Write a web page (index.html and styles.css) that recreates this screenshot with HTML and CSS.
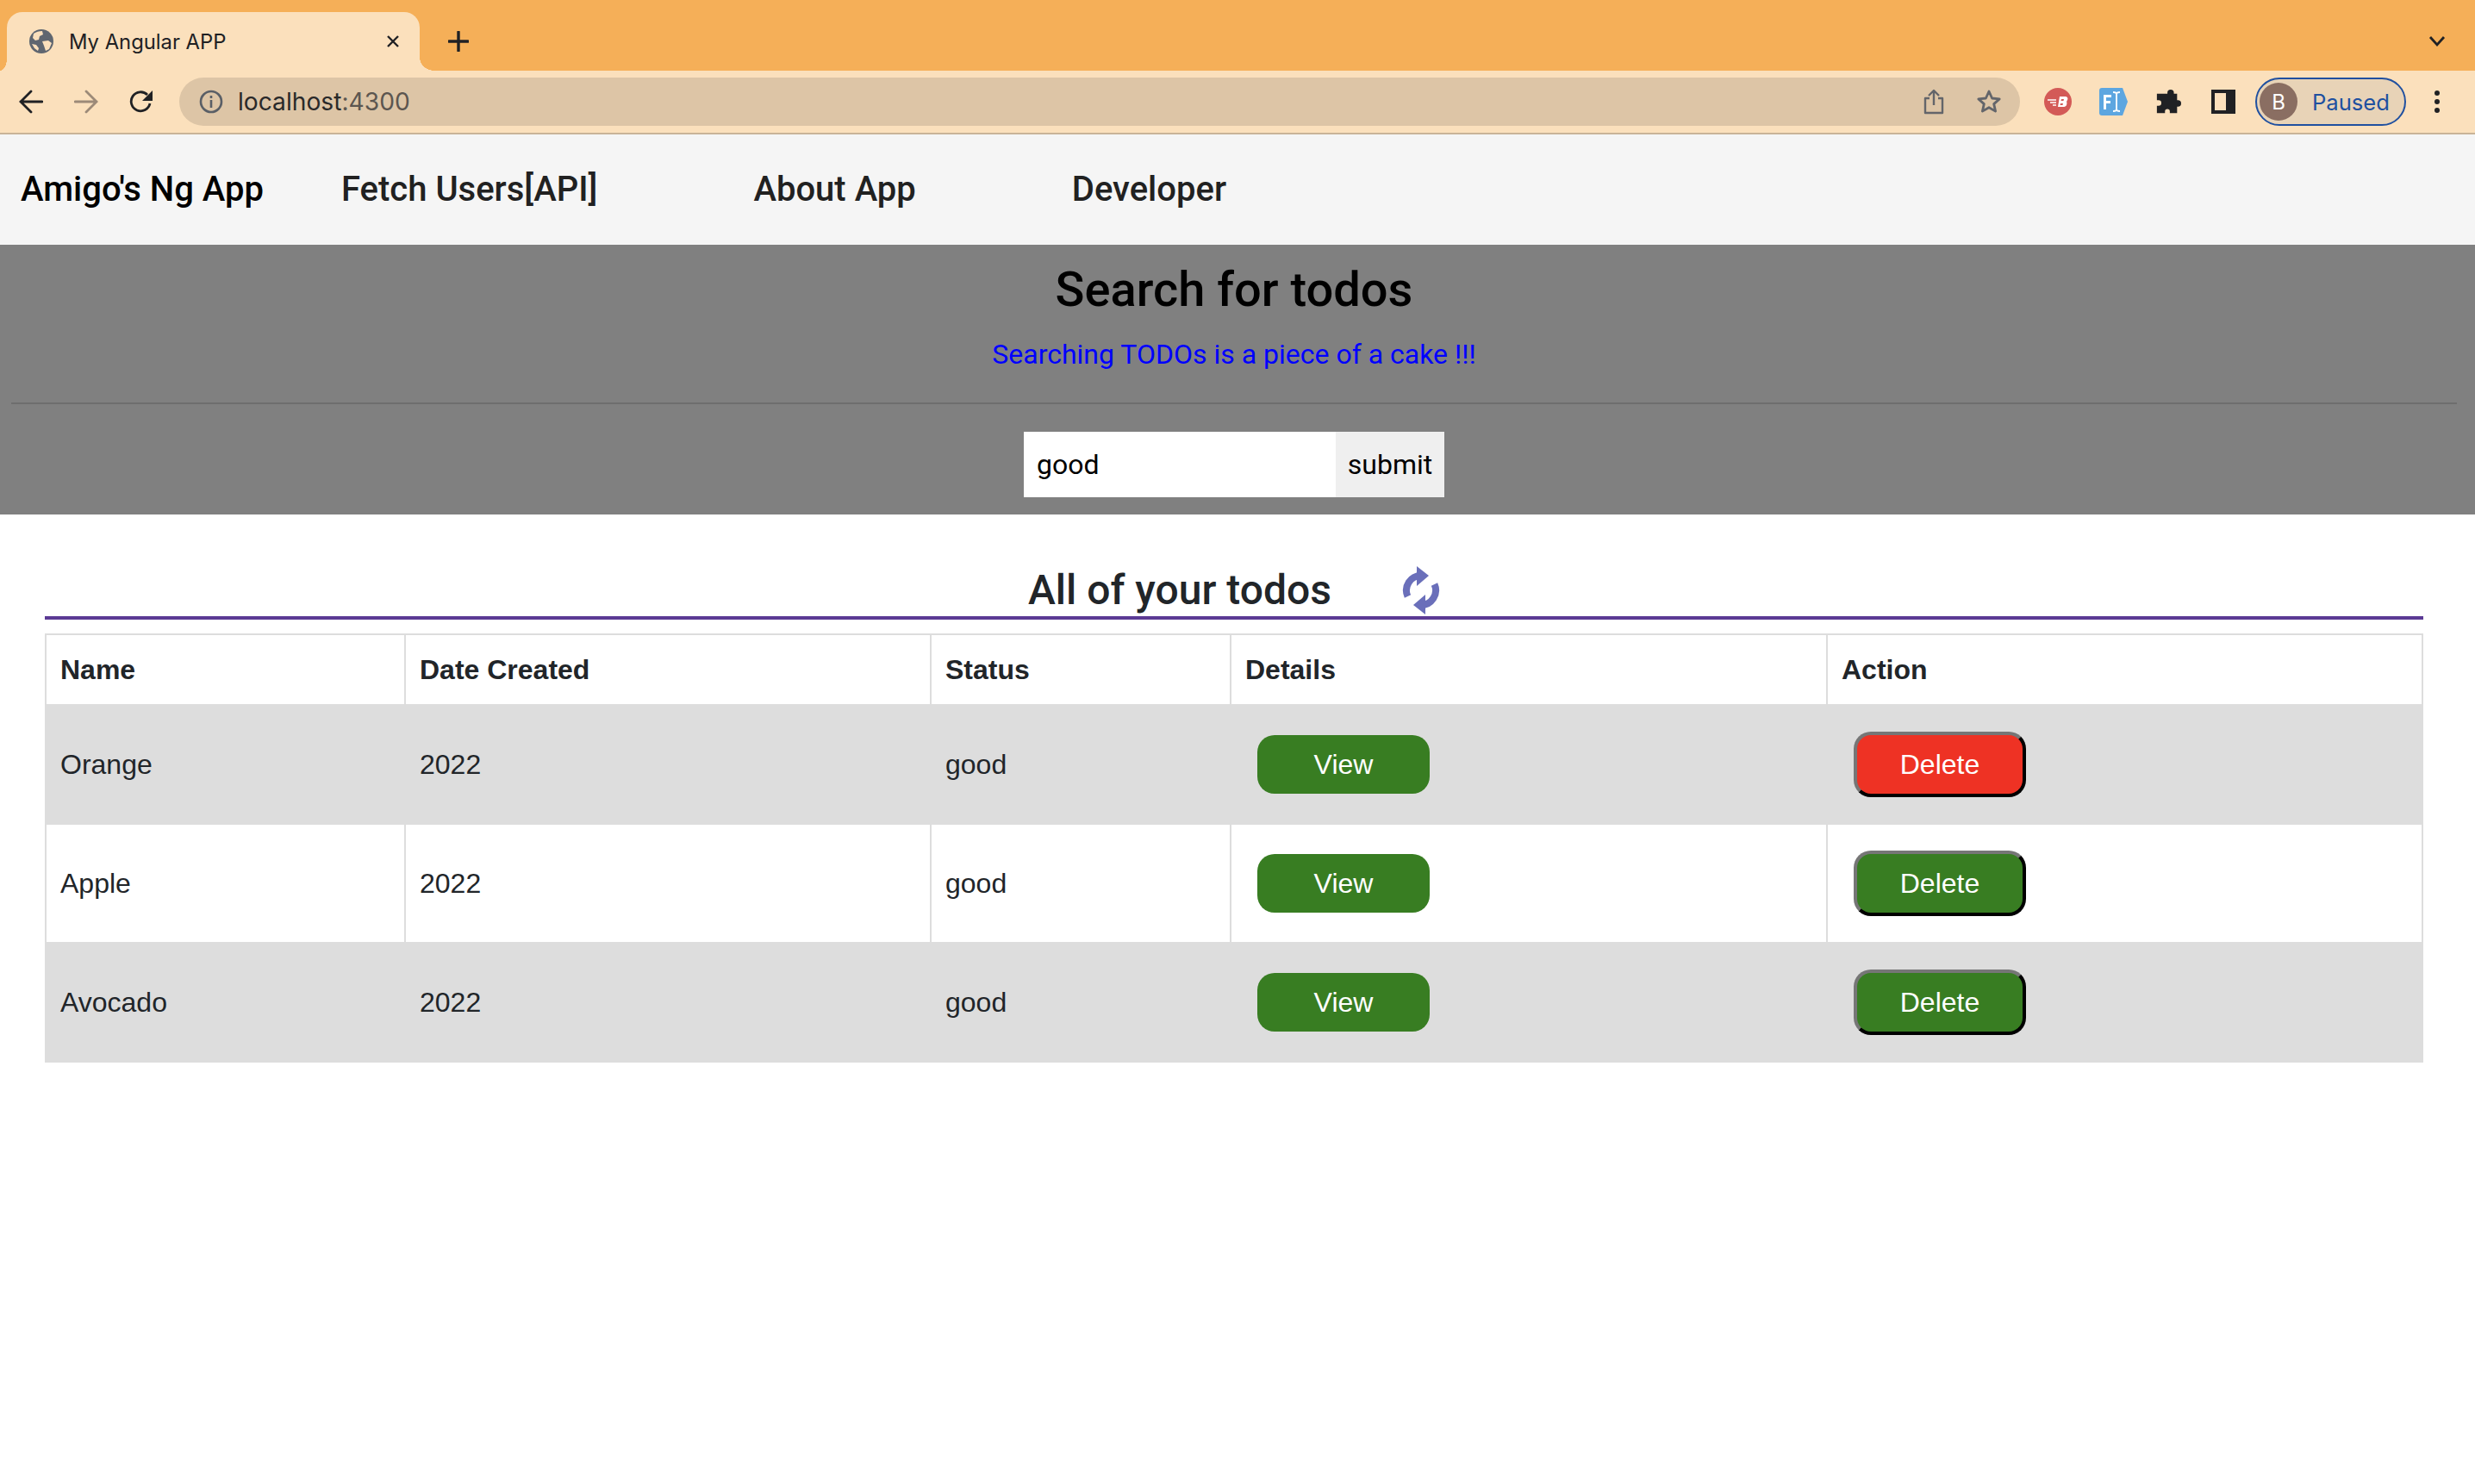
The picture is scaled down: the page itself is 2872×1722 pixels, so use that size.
FILE: index.html
```html
<!DOCTYPE html>
<html lang="en">
<head>
<meta charset="utf-8">
<title>My Angular APP</title>
<link rel="stylesheet" href="styles.css">
</head>
<body>
<header class="browser">
  <div class="tabstrip">
    <div class="tab">
      <svg class="globe" viewBox="0 0 28 28"><circle cx="14" cy="14" r="14" fill="#5f6670"/><path d="M5 5c3-2 6-3 10-3l1 4-4 2-1 4-4 1-3-3zM15 14l7-1 4 3-3 7-4 2-2-6zM3 17l5 1 3 4-1 3-4-3z" fill="#fbe0bc"/></svg>
      <span class="tab-title">My Angular APP</span>
      <svg class="tab-close" viewBox="0 0 16 16"><path d="M2 2l12 12M14 2L2 14" stroke="#202124" stroke-width="2.4" fill="none"/></svg>
    </div>
    <svg class="new-tab" viewBox="0 0 24 24"><path d="M12 1v22M1 12h22" stroke="#202124" stroke-width="3.4" stroke-linecap="round" fill="none"/></svg>
    <svg class="tab-menu" viewBox="0 0 20 14"><path d="M2 2l8 9 8-9" stroke="#202124" stroke-width="2.8" fill="none"/></svg>
  </div>
  <div class="toolbar">
    <svg class="nav-icon" viewBox="0 0 28 28"><path d="M27 14H2M14 2L2 14l12 12" stroke="#202124" stroke-width="2.8" fill="none" stroke-linecap="round"/></svg>
    <svg class="nav-icon" viewBox="0 0 28 28"><path d="M1 14h25M14 2l12 12-12 12" stroke="#9c8a78" stroke-width="2.8" fill="none" stroke-linecap="round"/></svg>
    <svg class="nav-icon" viewBox="0 0 28 28"><path d="M24 16a11 11 0 1 1-3-10" stroke="#202124" stroke-width="2.8" fill="none"/><path d="M27 1v12H15z" fill="#202124"/></svg>
    <div class="omnibox">
      <svg class="info" viewBox="0 0 28 28"><circle cx="14" cy="14" r="12" stroke="#5a5f66" stroke-width="2.6" fill="none"/><path d="M14 12v9M14 7v3" stroke="#5a5f66" stroke-width="2.6" fill="none"/></svg>
      <span class="url">localhost<span class="url-port">:4300</span></span>
      <svg class="share" viewBox="0 0 24 30"><path d="M7 11H2v17h20V11h-5M12 19V2M6 8l6-6 6 6" stroke="#63656a" stroke-width="2.4" fill="none" stroke-linejoin="round"/></svg>
      <svg class="star" viewBox="0 0 30 30"><path d="M15 3l3.6 8 8.6.9-6.5 5.7 1.9 8.500-7.600-4.400-7.600 4.400 1.900-8.500-6.500-5.700 8.600-.9z" stroke="#63656a" stroke-width="2.800" fill="none" stroke-linejoin="round"/></svg>
    </div>
    <svg class="ext-red" viewBox="0 0 32 32"><circle cx="16" cy="16" r="16" fill="#d35a57"/><path d="M4 14h10M7 17h7M10 20h4" stroke="#fff" stroke-width="1.600"/><path d="M18 10h6c3 0 4 2 3 4l-1 2c1 2 0 6-3 6h-7zM20 13l-.500 2h3l.5-2zM19 18l-.5 2h3l.5-2z" fill="#fff" fill-rule="evenodd"/></svg>
    <svg class="ext-blue" viewBox="0 0 33 32"><path d="M3 0h24l6 16-6 16H3a3 3 0 0 1-3-3V3a3 3 0 0 1 3-3z" fill="#5da6e0"/><path d="M5 8h9v3H8v4h5v3H8v7H5z" fill="#fff"/><path d="M16 5c3 0 4 1 4 2 0-1 1-2 4-2M20 7v18M16 27c3 0 4-1 4-2 0 1 1 2 4 2" stroke="#fff" stroke-width="1.800" fill="none"/></svg>
    <svg class="ext-puzzle" viewBox="0 0 30 32"><path d="M10 6h4V5a4 4 0 0 1 8 0v1h4v8h1a4 4 0 0 1 0 8h-1v8H17v-2a3 3 0 0 0-6 0v2H1v-9h2a3.500 3.500 0 0 0 0-7H1V6z" fill="#202124"/></svg>
    <div class="sidepanel"></div>
    <div class="profile">
      <span class="avatar">B</span>
      <span class="paused">Paused</span>
    </div>
    <svg class="dots" viewBox="0 0 6 26"><circle cx="3" cy="3" r="3" fill="#202124"/><circle cx="3" cy="13" r="3" fill="#202124"/><circle cx="3" cy="23" r="3" fill="#202124"/></svg>
  </div>
</header>

<nav class="navbar">
  <a class="brand">Amigo's Ng App</a>
  <a class="nav-link">Fetch Users[API]</a>
  <a class="nav-link">About App</a>
  <a class="nav-link">Developer</a>
</nav>

<section class="search">
  <h1 class="search-title">Search for todos</h1>
  <p class="search-sub">Searching TODOs is a piece of a cake !!!</p>
  <hr class="search-rule">
  <form class="search-form">
    <input class="search-input" type="text" value="good">
    <button class="search-submit" type="button">submit</button>
  </form>
</section>

<main class="todos">
  <div class="todos-head">
    <h2 class="todos-title">All of your todos</h2>
    <svg class="refresh" viewBox="0 0 44 56"><path d="M22 11A17 17 0 0 0 6.500 35" stroke="#6a6fba" stroke-width="8" fill="none"/><path d="M17 0l14 11-14 12z" fill="#6a6fba"/><g transform="rotate(180 22 28)"><path d="M22 11A17 17 0 0 0 6.500 35" stroke="#6a6fba" stroke-width="8" fill="none"/><path d="M17 0l14 11-14 12z" fill="#6a6fba"/></g></svg>
  </div>
  <table class="todo-table">
    <colgroup>
      <col class="col-name"><col class="col-date"><col class="col-status"><col class="col-details"><col class="col-action">
    </colgroup>
    <thead>
      <tr><th>Name</th><th>Date Created</th><th>Status</th><th>Details</th><th>Action</th></tr>
    </thead>
    <tbody>
      <tr class="striped">
        <td>Orange</td><td>2022</td><td>good</td>
        <td><button class="btn btn-view" type="button">View</button></td>
        <td><button class="btn btn-delete btn-danger" type="button">Delete</button></td>
      </tr>
      <tr>
        <td>Apple</td><td>2022</td><td>good</td>
        <td><button class="btn btn-view" type="button">View</button></td>
        <td><button class="btn btn-delete" type="button">Delete</button></td>
      </tr>
      <tr class="striped">
        <td>Avocado</td><td>2022</td><td>good</td>
        <td><button class="btn btn-view" type="button">View</button></td>
        <td><button class="btn btn-delete" type="button">Delete</button></td>
      </tr>
    </tbody>
  </table>
</main>
</body>
</html>
```
FILE: styles.css
```css
* { box-sizing: border-box; }
html, body { margin: 0; padding: 0; background: #fff; }
body { font-family: "Liberation Sans", Arial, sans-serif; color: #212529; overflow: hidden; }

/* Browser chrome */
.browser { font-family: Inter, "Noto Sans", sans-serif; }
.tabstrip {
  height: 82px;
  background: #f5af58;
  display: flex;
  align-items: flex-end;
  padding-left: 8px;
}
.tab {
  position: relative;
  width: 479px;
  height: 68px;
  background: #fbe0bc;
  border-radius: 18px 18px 0 0;
  display: flex;
  align-items: center;
  padding-left: 26px;
}
.tab::before, .tab::after {
  content: "";
  position: absolute;
  bottom: 0;
}
.tab::before {
  left: -8px;
  width: 8px;
  height: 14px;
  background: radial-gradient(ellipse 8px 14px at 0 0, transparent 98%, #fbe0bc 100%);
}
.tab::after {
  right: -17px;
  width: 17px;
  height: 15px;
  background: radial-gradient(ellipse 17px 15px at 100% 0, transparent 98%, #fbe0bc 100%);
}
.globe { width: 28px; height: 28px; flex: none; }
.tab-title { margin-left: 18px; font-size: 23.800px; color: #202124; white-space: nowrap; }
.tab-close { width: 16px; height: 16px; margin-left: auto; margin-right: 23px; flex: none; }
.new-tab { width: 24px; height: 24px; margin: 0 0 22px 33px; flex: none; }
.tab-menu { width: 20px; height: 14px; margin: 0 34px 27px auto; flex: none; }

.toolbar {
  height: 74px;
  background: #fbe0bc;
  border-bottom: 2px solid #c9b498;
  display: flex;
  align-items: center;
  padding: 0 0 0 22px;
}
.nav-icon { width: 28px; height: 28px; margin-right: 36px; flex: none; }
.nav-icon:nth-of-type(3) { margin-right: 30px; }
.omnibox {
  width: 2136px;
  height: 56px;
  border-radius: 28px;
  background: #ddc5a6;
  display: flex;
  align-items: center;
  padding-left: 23px;
  flex: none;
}
.info { width: 28px; height: 28px; flex: none; }
.url { margin-left: 17px; font-size: 28.200px; color: #2a2a2a; }
.url-port { color: #5c5650; }
.share { width: 24px; height: 30px; margin-left: auto; margin-right: 37px; flex: none; }
.star { width: 30px; height: 30px; margin-right: 21px; flex: none; }
.ext-red { width: 32px; height: 32px; margin-left: 28px; flex: none; }
.ext-blue { width: 33px; height: 32px; margin-left: 32px; flex: none; }
.ext-puzzle { width: 30px; height: 30px; margin-left: 32px; flex: none; }
.sidepanel {
  width: 28px;
  height: 28px;
  margin-left: 35px;
  border: 4px solid #202124;
  border-right-width: 11px;
  flex: none;
}
.profile {
  width: 175px;
  height: 56px;
  margin-left: 23px;
  border: 2.500px solid #2050a0;
  border-radius: 28px;
  background: #e8d3b7;
  display: flex;
  align-items: center;
  padding-left: 3px;
  flex: none;
}
.avatar {
  width: 44px;
  height: 44px;
  border-radius: 50%;
  background: #8a6e62;
  color: #fff;
  display: flex;
  align-items: center;
  justify-content: center;
  font-size: 24px;
}
.paused { margin-left: 17px; font-size: 25.600px; color: #2050a0; }
.dots { width: 6px; height: 26px; margin-left: 33px; flex: none; }

/* App nav */
.navbar {
  height: 128px;
  background: #f5f5f5;
  display: flex;
  align-items: center;
  padding: 0 0 1px 24px;
  font-family: Roboto, sans-serif;
  font-weight: 500;
  font-size: 40px;
  white-space: nowrap;
}
.brand { color: #000; margin-right: 90px; }
.nav-link { color: #212121; margin-right: 181px; }

/* Search band */
.search {
  height: 313px;
  background: #808080;
  padding: 0 21px 0 13px;
  text-align: center;
  font-family: Roboto, sans-serif;
}
.search-title {
  margin: 0;
  padding-top: 18px;
  font-size: 56px;
  line-height: 68px;
  font-weight: 500;
  color: #000;
}
.search-sub {
  margin: 20px 0 0;
  font-size: 32px;
  line-height: 42px;
  color: #0000ff;
}
.search-rule {
  margin: 35px 0 0;
  border: 0;
  border-top: 2px solid #6e6e6e;
}
.search-form { display: flex; justify-content: center; margin-top: 32px; }
.search-input {
  width: 362px;
  height: 76px;
  border: 0;
  padding: 0 15px;
  margin: 0;
  background: #fff;
  font: 32px Roboto, sans-serif;
  color: #000;
  outline: none;
}
.search-submit {
  width: 126px;
  height: 76px;
  border: 0;
  padding: 0;
  background: #efefef;
  font: 32px Roboto, sans-serif;
  color: #000;
}

/* Todos */
.todos { margin: 0 60px 0 52px; }
.todos-head {
  height: 122px;
  border-bottom: 4px solid #5b3a94;
  display: flex;
  justify-content: center;
  align-items: flex-end;
  margin-bottom: 16px;
  gap: 82px;
}
.todos-title {
  margin: 0;
  font-family: Roboto, sans-serif;
  font-weight: 500;
  font-size: 48px;
  line-height: 60px;
  color: #212529;
}
.refresh { width: 44px; height: 56px; margin-bottom: 2px; flex: none; }

.todo-table {
  width: 2758px;
  border-collapse: collapse;
  table-layout: fixed;
  font-size: 32px;
  line-height: 48px;
  border: 2px solid #ddd;
}
.col-name { width: 417px; }
.col-date { width: 610px; }
.col-status { width: 348px; }
.col-details { width: 692px; }
.col-action { width: 691px; }
.todo-table th, .todo-table td {
  border: 2px solid #ddd;
  text-align: left;
  padding: 16px;
}
.todo-table th { font-weight: 700; }
.todo-table td { padding: 30px 16px; vertical-align: middle; }
.striped { background: #ddd; }

.btn {
  display: block;
  width: 200px;
  color: #fff;
  font: 32px "Liberation Sans", Arial, sans-serif;
  background: #387d22;
  border-radius: 20px;
}
.btn-view { height: 68px; border: 0; margin-left: 14px; }
.btn-delete { height: 76px; border: 4px outset #767676; border-color: #767676 #212121 #212121 #767676; margin-left: 14px; }
.btn-danger { background: #ee3224; }
```
